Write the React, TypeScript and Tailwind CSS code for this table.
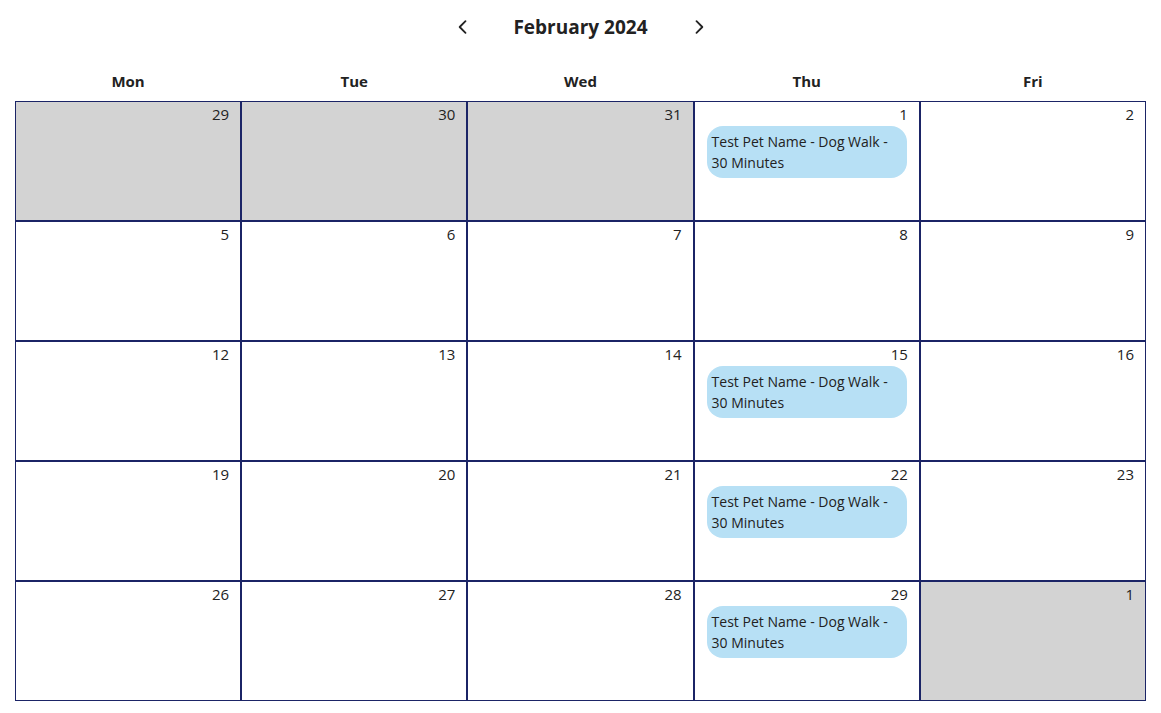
const DAYS = ["Mon", "Tue", "Wed", "Thu", "Fri"];

type Cell = { day: number; outside?: boolean; event?: boolean };

const WEEKS: Cell[][] = [
  [{ day: 29, outside: true }, { day: 30, outside: true }, { day: 31, outside: true }, { day: 1, event: true }, { day: 2 }],
  [{ day: 5 }, { day: 6 }, { day: 7 }, { day: 8 }, { day: 9 }],
  [{ day: 12 }, { day: 13 }, { day: 14 }, { day: 15, event: true }, { day: 16 }],
  [{ day: 19 }, { day: 20 }, { day: 21 }, { day: 22, event: true }, { day: 23 }],
  [{ day: 26 }, { day: 27 }, { day: 28 }, { day: 29, event: true }, { day: 1, outside: true }],
];

function Chevron({ dir }: { dir: "left" | "right" }) {
  return (
    <svg className="h-5 w-5 text-[#222]" fill="none" viewBox="0 0 24 24" stroke="currentColor" strokeWidth={2.2} aria-hidden>
      <path strokeLinecap="round" strokeLinejoin="round" d={dir === "left" ? "M15 5l-7 7 7 7" : "M9 5l7 7-7 7"} />
    </svg>
  );
}

export default function App() {
  return (
    <div className="min-h-[713px] bg-white px-[15px] text-[#222]" style={{ fontFamily: '"Open Sans", "Noto Sans", sans-serif' }}>
      <div className="flex h-[54px] items-center justify-center">
        <button type="button" className="flex h-8 w-8 items-center justify-center" aria-label="Previous month">
          <Chevron dir="left" />
        </button>
        <h1 className="w-[204px] text-center text-[19px] font-bold">February 2024</h1>
        <button type="button" className="flex h-8 w-8 items-center justify-center" aria-label="Next month">
          <Chevron dir="right" />
        </button>
      </div>

      <div className="grid grid-cols-5 pt-[11px] pb-[4px]">
        {DAYS.map((d) => (
          <div key={d} className="text-center text-[15px] font-bold leading-[32px]">
            {d}
          </div>
        ))}
      </div>

      <div className="grid grid-cols-5">
        {WEEKS.flat().map((c, i) => (
          <div
            key={i}
            className={`h-[120px] border border-[#1b2466] ${c.outside ? "bg-[#d3d3d3]" : "bg-white"}`}
          >
            <div className="pr-[11px] text-right text-[15px] leading-[24px]">{c.day}</div>
            {c.event ? (
              <div className="mx-[12px] rounded-[16px] bg-[#b7e0f5] px-[5px] py-[5px] text-[14px] leading-[21px] text-[#222]">
                Test Pet Name - Dog Walk - 30 Minutes
              </div>
            ) : null}
          </div>
        ))}
      </div>
    </div>
  );
}
